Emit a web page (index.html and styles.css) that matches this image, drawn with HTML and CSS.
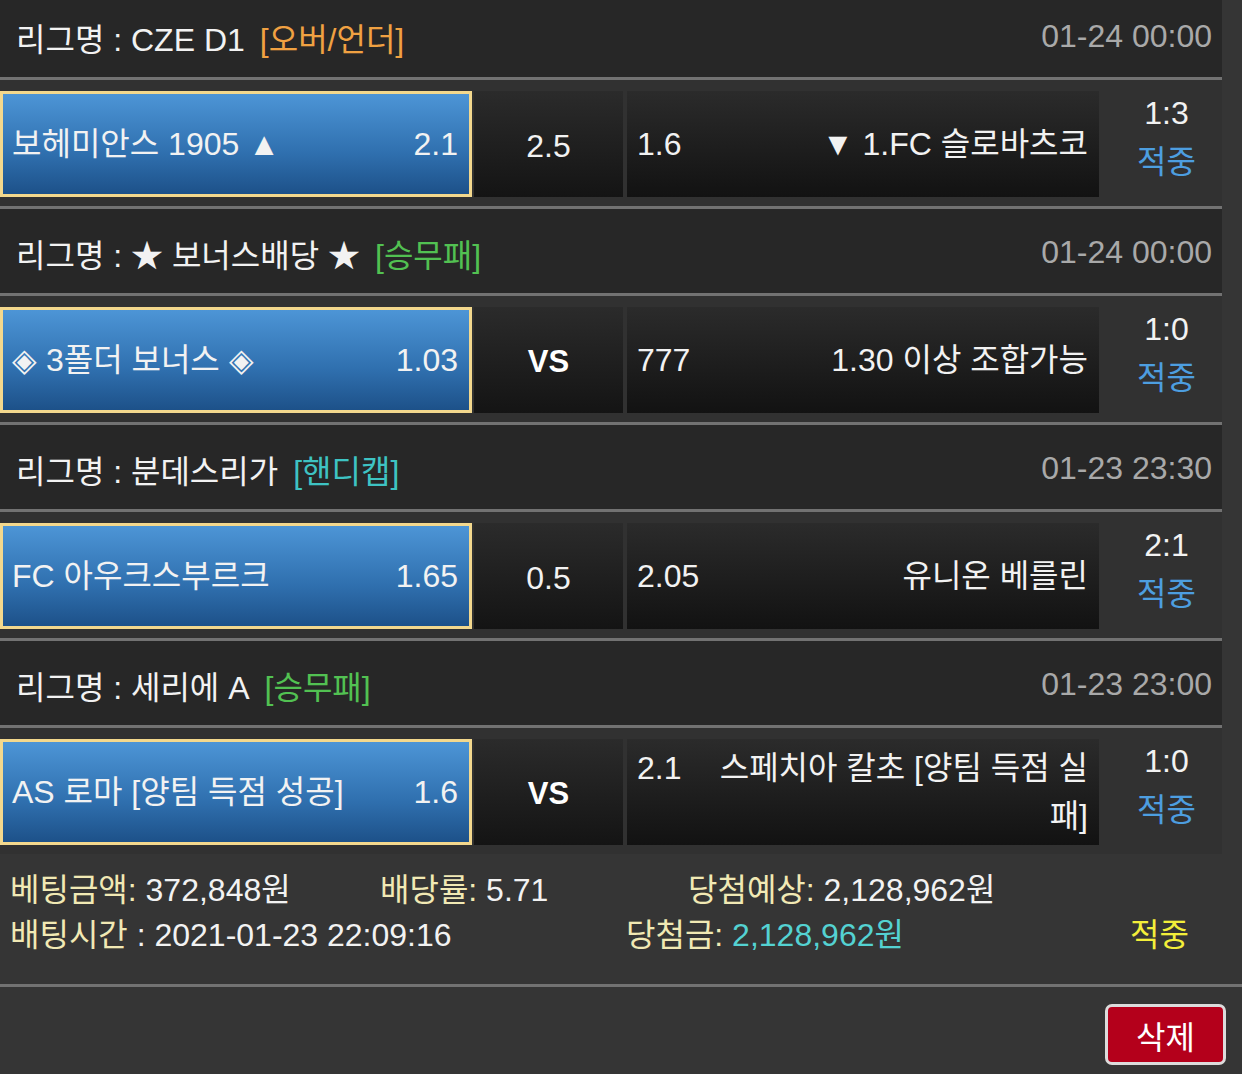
FILE: index.html
```html
<!DOCTYPE html>
<html>
<head>
  <meta charset="utf-8">
  <link rel="stylesheet" href="styles.css">
</head>
<body>
  <div class="bet">
    <div class="games">
      <!-- 1경기 -->
      <div class="league">
        <div class="league-name">리그명 : CZE D1<span class="type type-ou">[오버/언더]</span></div>
        <div class="league-time">01-24 00:00</div>
      </div>
      <div class="game">
        <div class="home picked"><span class="team">보헤미안스 1905 ▲</span><span class="odds">2.1</span></div>
        <div class="draw">2.5</div>
        <div class="away">
          <div class="away-body"><span class="odds">1.6</span><span class="team">▼ 1.FC 슬로바츠코</span></div>
        </div>
        <div class="result"><div class="score">1:3</div><div class="hit">적중</div></div>
      </div>

      <!-- 2경기 -->
      <div class="league">
        <div class="league-name">리그명 : ★ 보너스배당 ★<span class="type type-wdl">[승무패]</span></div>
        <div class="league-time">01-24 00:00</div>
      </div>
      <div class="game">
        <div class="home picked"><span class="team">◈ 3폴더 보너스 ◈</span><span class="odds">1.03</span></div>
        <div class="draw vs">VS</div>
        <div class="away">
          <div class="away-body"><span class="odds">777</span><span class="team">1.30 이상 조합가능</span></div>
        </div>
        <div class="result"><div class="score">1:0</div><div class="hit">적중</div></div>
      </div>

      <!-- 3경기 -->
      <div class="league">
        <div class="league-name">리그명 : 분데스리가<span class="type type-hc">[핸디캡]</span></div>
        <div class="league-time">01-23 23:30</div>
      </div>
      <div class="game">
        <div class="home picked"><span class="team">FC 아우크스부르크</span><span class="odds">1.65</span></div>
        <div class="draw">0.5</div>
        <div class="away">
          <div class="away-body"><span class="odds">2.05</span><span class="team">유니온 베를린</span></div>
        </div>
        <div class="result"><div class="score">2:1</div><div class="hit">적중</div></div>
      </div>

      <!-- 4경기 -->
      <div class="league">
        <div class="league-name">리그명 : 세리에 A<span class="type type-wdl">[승무패]</span></div>
        <div class="league-time">01-23 23:00</div>
      </div>
      <div class="game">
        <div class="home picked"><span class="team">AS 로마 [양팀 득점 성공]</span><span class="odds">1.6</span></div>
        <div class="draw vs">VS</div>
        <div class="away">
          <div class="away-body"><span class="odds">2.1</span><span class="team">스페치아 칼초 [양팀 득점 실패]</span></div>
        </div>
        <div class="result"><div class="score">1:0</div><div class="hit">적중</div></div>
      </div>
    </div>

    <!-- 베팅 요약 -->
    <div class="summary">
      <div class="line line-1">
        <div><span class="label">베팅금액:</span> 372,848원</div>
        <div><span class="label">배당률:</span> 5.71</div>
        <div><span class="label">당첨예상:</span> 2,128,962원</div>
      </div>
      <div class="line line-2">
        <div><span class="label">배팅시간</span> : 2021-01-23 22:09:16</div>
        <div><span class="label">당첨금:</span> <span class="win">2,128,962원</span></div>
        <div class="status">적중</div>
      </div>
    </div>

    <div class="actions">
      <button class="btn-delete">삭제</button>
    </div>
  </div>
</body>
</html>
```

FILE: styles.css
```css
/* 기본 */
body {
  margin: 0;
  background: #353535;
  color: #f2f2f2;
  font-family: "Liberation Sans", "Noto Sans CJK KR", sans-serif;
  font-size: 32px;
  overflow: hidden;
}

/* 경기 목록 */
.games {
  width: 1222px;
  margin-top: -7px;
}

/* 리그 헤더 */
.league {
  display: flex;
  justify-content: space-between;
  align-items: center;
  height: 87px;
  box-sizing: border-box;
  padding: 3px 10px 0 16px;
  background: #272727;
  border-bottom: 3px solid #727272;
}

.league-time {
  color: #a9a9a9;
}

.type {
  margin-left: 15px;
}

.type-ou { color: #f0a142; }
.type-wdl { color: #52c152; }
.type-hc { color: #3ec3c3; }

/* 경기 행 */
.game {
  display: flex;
  height: 129px;
  box-sizing: border-box;
  padding: 11px 0 9px;
  background: #313131;
  border-bottom: 3px solid #727272;
}

.game:last-child {
  height: 126px;
  border-bottom: 0;
}

.home, .draw, .away {
  height: 106px;
  box-sizing: border-box;
  display: flex;
  align-items: center;
  line-height: 48px;
}

.home {
  width: 472px;
  justify-content: space-between;
  padding: 0 11px 0 9px;
  border: 3px solid #f3d88d;
  background: linear-gradient(#4d95d6, #2f6fae 60%, #1d5189);
}

.draw {
  width: 149px;
  margin-left: 2px;
  justify-content: center;
  padding-top: 4px;
  background: linear-gradient(#2b2b2b, #141414);
}

.vs {
  font-weight: bold;
  font-size: 31px;
  color: #fff;
}

.away {
  width: 472px;
  margin-left: 4px;
  padding: 0 11px 0 10px;
  background: linear-gradient(#2b2b2b, #121212);
}

.away-body {
  display: flex;
  justify-content: space-between;
  align-items: flex-start;
  width: 100%;
}

.away .team {
  max-width: 375px;
  text-align: right;
}

/* 결과 */
.result {
  flex: 1;
  padding-left: 12px;
  text-align: center;
}

.score {
  line-height: 44px;
}

.hit {
  line-height: 54px;
  color: #4d9ee0;
}

/* 요약 */
.summary {
  padding: 14px 10px 26px;
  border-bottom: 3px solid #727272;
}

.line {
  display: grid;
  line-height: 45px;
}

.line-1 {
  grid-template-columns: 370px 308px 1fr;
}

.line-2 {
  grid-template-columns: 616px 504px 1fr;
}

.label {
  color: #f1e9b4;
}

.win {
  color: #54d2d2;
}

.status {
  color: #f3ef3a;
}

/* 버튼 */
.actions {
  display: flex;
  justify-content: flex-end;
  padding: 17px 16px 0 0;
}

.btn-delete {
  width: 121px;
  height: 61px;
  border: 3px solid #dcdcdc;
  border-radius: 7px;
  background: #b4001b;
  color: #fff;
  font-family: inherit;
  font-size: 32px;
  padding: 0;
}
```
